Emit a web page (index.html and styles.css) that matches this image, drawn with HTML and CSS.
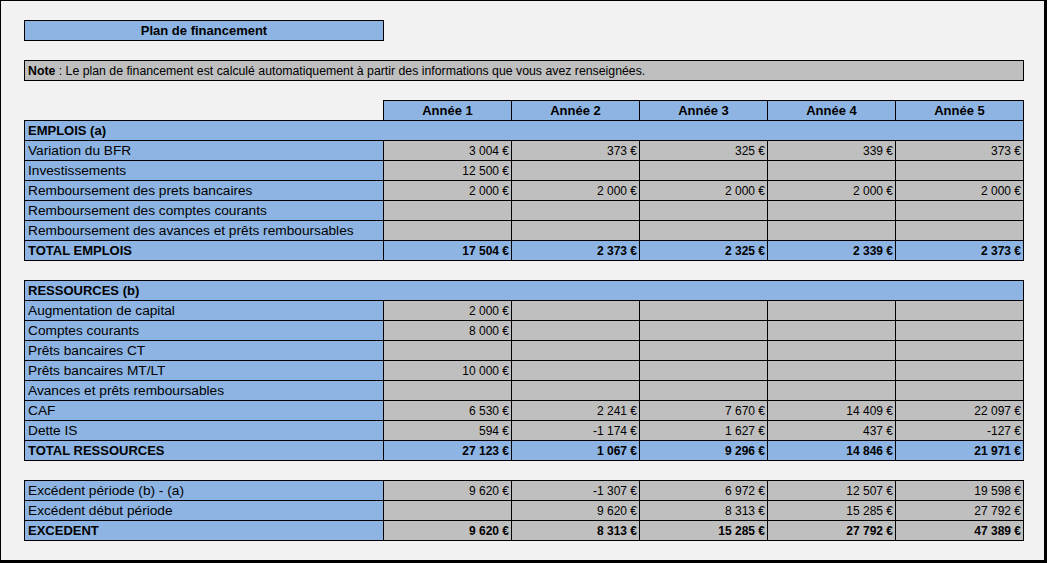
FILE: index.html
```html
<!DOCTYPE html>
<html lang="fr">
<head>
<meta charset="utf-8">
<title>Plan de financement</title>
<link rel="stylesheet" href="styles.css">
</head>
<body>
<div class="frame">
  <div class="title">Plan de financement</div>
  <div class="note"><b>Note</b> : Le plan de financement est calculé automatiquement à partir des informations que vous avez renseignées.</div>
  <table class="plan">
    <colgroup>
      <col class="c-label"><col class="c-year"><col class="c-year"><col class="c-year"><col class="c-year"><col class="c-year">
    </colgroup>
    <thead>
      <tr class="head">
        <th class="blank"></th><th>Année 1</th><th>Année 2</th><th>Année 3</th><th>Année 4</th><th>Année 5</th>
      </tr>
    </thead>
    <tbody>
      <tr class="section"><td colspan="6">EMPLOIS (a)</td></tr>
      <tr><td class="lbl">Variation du BFR</td><td class="v">3&nbsp;004&nbsp;€</td><td class="v">373&nbsp;€</td><td class="v">325&nbsp;€</td><td class="v">339&nbsp;€</td><td class="v">373&nbsp;€</td></tr>
      <tr><td class="lbl">Investissements</td><td class="v">12&nbsp;500&nbsp;€</td><td class="v"></td><td class="v"></td><td class="v"></td><td class="v"></td></tr>
      <tr><td class="lbl">Remboursement des prets bancaires</td><td class="v">2&nbsp;000&nbsp;€</td><td class="v">2&nbsp;000&nbsp;€</td><td class="v">2&nbsp;000&nbsp;€</td><td class="v">2&nbsp;000&nbsp;€</td><td class="v">2&nbsp;000&nbsp;€</td></tr>
      <tr><td class="lbl">Remboursement des comptes courants</td><td class="v"></td><td class="v"></td><td class="v"></td><td class="v"></td><td class="v"></td></tr>
      <tr><td class="lbl">Remboursement des avances et prêts remboursables</td><td class="v"></td><td class="v"></td><td class="v"></td><td class="v"></td><td class="v"></td></tr>
      <tr class="total"><td class="lbl">TOTAL EMPLOIS</td><td class="v">17&nbsp;504&nbsp;€</td><td class="v">2&nbsp;373&nbsp;€</td><td class="v">2&nbsp;325&nbsp;€</td><td class="v">2&nbsp;339&nbsp;€</td><td class="v">2&nbsp;373&nbsp;€</td></tr>
      <tr class="gap"><td colspan="6"></td></tr>
      <tr class="section"><td colspan="6">RESSOURCES (b)</td></tr>
      <tr><td class="lbl">Augmentation de capital</td><td class="v">2&nbsp;000&nbsp;€</td><td class="v"></td><td class="v"></td><td class="v"></td><td class="v"></td></tr>
      <tr><td class="lbl">Comptes courants</td><td class="v">8&nbsp;000&nbsp;€</td><td class="v"></td><td class="v"></td><td class="v"></td><td class="v"></td></tr>
      <tr><td class="lbl">Prêts bancaires CT</td><td class="v"></td><td class="v"></td><td class="v"></td><td class="v"></td><td class="v"></td></tr>
      <tr><td class="lbl">Prêts bancaires MT/LT</td><td class="v">10&nbsp;000&nbsp;€</td><td class="v"></td><td class="v"></td><td class="v"></td><td class="v"></td></tr>
      <tr><td class="lbl">Avances et prêts remboursables</td><td class="v"></td><td class="v"></td><td class="v"></td><td class="v"></td><td class="v"></td></tr>
      <tr><td class="lbl">CAF</td><td class="v">6&nbsp;530&nbsp;€</td><td class="v">2&nbsp;241&nbsp;€</td><td class="v">7&nbsp;670&nbsp;€</td><td class="v">14&nbsp;409&nbsp;€</td><td class="v">22&nbsp;097&nbsp;€</td></tr>
      <tr><td class="lbl">Dette IS</td><td class="v">594&nbsp;€</td><td class="v">-1&nbsp;174&nbsp;€</td><td class="v">1&nbsp;627&nbsp;€</td><td class="v">437&nbsp;€</td><td class="v">-127&nbsp;€</td></tr>
      <tr class="total"><td class="lbl">TOTAL RESSOURCES</td><td class="v">27&nbsp;123&nbsp;€</td><td class="v">1&nbsp;067&nbsp;€</td><td class="v">9&nbsp;296&nbsp;€</td><td class="v">14&nbsp;846&nbsp;€</td><td class="v">21&nbsp;971&nbsp;€</td></tr>
      <tr class="gap"><td colspan="6"></td></tr>
      <tr><td class="lbl">Excédent période (b) - (a)</td><td class="v">9&nbsp;620&nbsp;€</td><td class="v">-1&nbsp;307&nbsp;€</td><td class="v">6&nbsp;972&nbsp;€</td><td class="v">12&nbsp;507&nbsp;€</td><td class="v">19&nbsp;598&nbsp;€</td></tr>
      <tr><td class="lbl">Excédent début période</td><td class="v"></td><td class="v">9&nbsp;620&nbsp;€</td><td class="v">8&nbsp;313&nbsp;€</td><td class="v">15&nbsp;285&nbsp;€</td><td class="v">27&nbsp;792&nbsp;€</td></tr>
      <tr class="final"><td class="lbl">EXCEDENT</td><td class="v">9&nbsp;620&nbsp;€</td><td class="v">8&nbsp;313&nbsp;€</td><td class="v">15&nbsp;285&nbsp;€</td><td class="v">27&nbsp;792&nbsp;€</td><td class="v">47&nbsp;389&nbsp;€</td></tr>
    </tbody>
  </table>
</div>
</body>
</html>
```

FILE: styles.css
```css
html, body {
  margin: 0;
  padding: 0;
  background: #ffffff;
}

.frame {
  box-sizing: border-box;
  width: 1047px;
  height: 563px;
  background: #f2f2f2;
  border-top: 1px solid #000;
  border-left: 1px solid #000;
  border-right: 3px solid #000;
  border-bottom: 3px solid #000;
  padding: 19px 0 0 23px;
  font-family: "Liberation Sans", Arial, sans-serif;
  color: #000;
}

.title {
  box-sizing: border-box;
  width: 360px;
  height: 21px;
  border: 1px solid #000;
  background: #8db4e2;
  font-size: 13px;
  font-weight: bold;
  line-height: 20px;
  text-align: center;
}

.note {
  box-sizing: border-box;
  width: 1000px;
  height: 21px;
  margin-top: 19px;
  border: 1px solid #000;
  background: #bfbfbf;
  font-size: 12.3px;
  line-height: 20px;
  padding-left: 3px;
}

.plan {
  margin-top: 19px;
  width: 1000px;
  border-collapse: collapse;
  table-layout: fixed;
}

.c-label { width: 359px; }
.c-year { width: 128px; }

.plan tr { height: 20px; }

.plan th,
.plan td {
  border: 1px solid #000;
  padding: 1px 3px 0;
  height: 18px;
  line-height: 18px;
  white-space: nowrap;
  overflow: hidden;
  vertical-align: bottom;
}

.plan th {
  background: #8db4e2;
  font-size: 13px;
  font-weight: bold;
  text-align: center;
}

.plan th.blank {
  background: transparent;
  border-top: none;
  border-left: none;
}

.plan .lbl {
  background: #8db4e2;
  font-size: 13.7px;
}

.plan .v {
  background: #bfbfbf;
  font-size: 12px;
  text-align: right;
  padding-right: 2px;
}

.plan .section td {
  background: #8db4e2;
  font-size: 13px;
  font-weight: bold;
}

.plan .total td {
  background: #8db4e2;
  font-weight: bold;
}

.plan .total .lbl {
  font-size: 13px;
}

.plan .final td {
  font-weight: bold;
}

.plan .final .lbl {
  font-size: 13px;
}

.plan .gap td {
  border-left: none;
  border-right: none;
  background: transparent;
}
```
